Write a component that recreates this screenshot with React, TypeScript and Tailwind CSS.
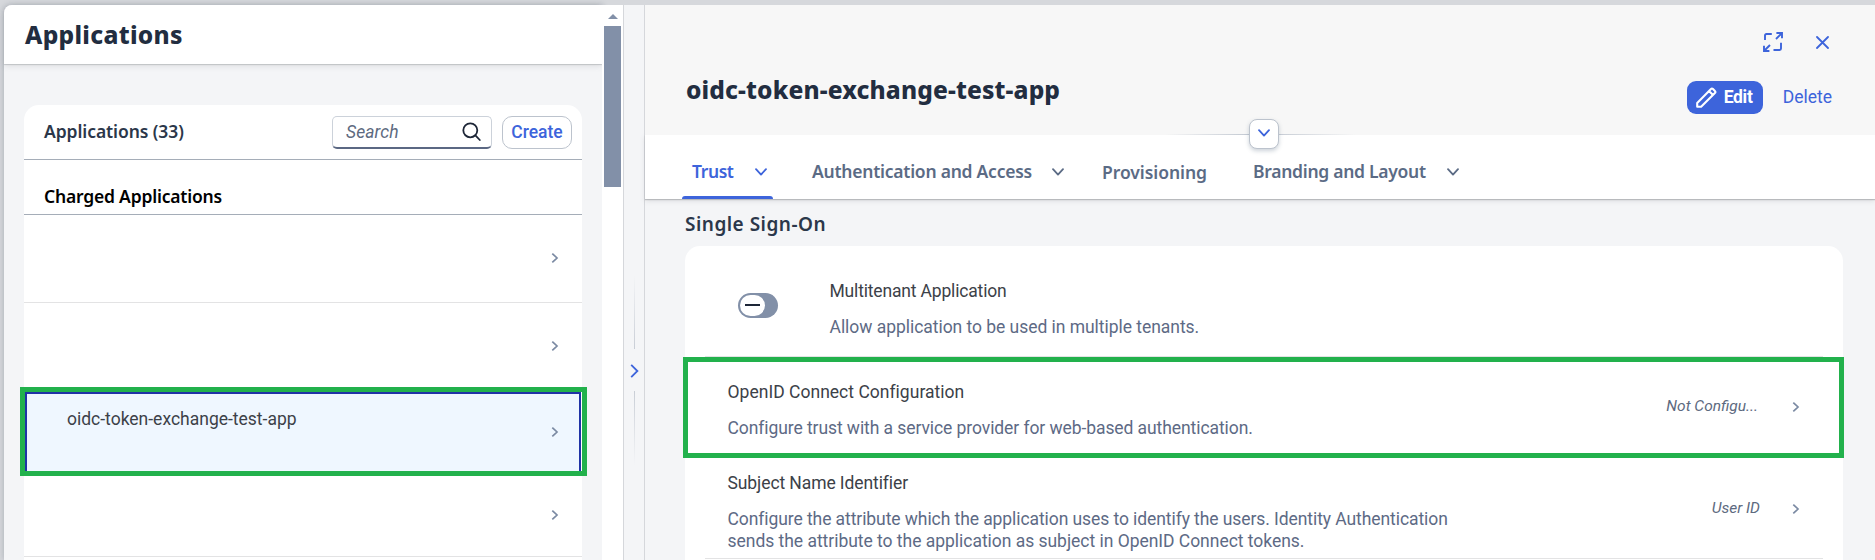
import type { ReactNode } from "react";

const MEDIUM = "font-['Noto_Sans',sans-serif] font-semibold text-[17.5px] whitespace-nowrap";

function ChevronRight({ className = "" }: { className?: string }) {
  return (
    <svg viewBox="0 0 8 10" className={`h-[10px] w-2 shrink-0 ${className}`} fill="none" stroke="currentColor" strokeWidth="1.7">
      <path d="M1.3 0.6 6 5 1.3 9.4" />
    </svg>
  );
}

function ChevronDown() {
  return (
    <svg viewBox="0 0 12 8" className="h-2 w-3 shrink-0" fill="none" stroke="currentColor" strokeWidth="1.8" strokeLinecap="round" strokeLinejoin="round">
      <path d="M1 1.2 6 6.6 11 1.2" />
    </svg>
  );
}

function AppRow({ className }: { className: string }) {
  return (
    <div className={`flex items-center justify-end border-b border-[#e3e3e4] pr-[23px] pb-0.5 text-[#7b8aa3] ${className}`}>
      <ChevronRight />
    </div>
  );
}

function ApplicationsPanel() {
  return (
    <section className="relative z-10 flex w-[598px] shrink-0 flex-col rounded-tl-lg bg-[#f4f5f7] shadow-[0_0_6px_rgba(34,53,72,0.25)]">
      <header className="z-10 flex h-[59px] shrink-0 items-center rounded-tl-lg bg-white pl-[21px] shadow-[0_1px_1px_rgba(85,90,95,0.25),0_2px_6px_rgba(85,90,95,0.15)]">
        <h1 className="font-['Noto_Sans',sans-serif] text-[24.5px] font-extrabold leading-8 tracking-[0.3px] text-[#222d40]">Applications</h1>
      </header>
      <div className="mx-5 mt-[41px] flex h-[455px] flex-col rounded-t-[15px] bg-white">
        <div className="flex h-[55px] shrink-0 items-center border-b border-[#a5adb8] pr-[10px] pl-5">
          <h2 className={`${MEDIUM} pb-0.5 tracking-[-0.08px] text-[#2b374a]`}>Applications (33)</h2>
          <div className="ml-auto flex h-[33px] w-[160px] items-center justify-between rounded-[5px] border border-b-2 border-[#ccd2da] border-b-[#5b6883] pr-[10px] pl-[13px]">
            <span className="pt-0.5 text-[17.5px] italic tracking-[0.1px] text-[#5d6a80]">Search</span>
            <svg viewBox="0 0 19 19" className="size-[19px]" fill="none" stroke="#1d2637" strokeWidth="1.8" strokeLinecap="round">
              <circle cx="8.3" cy="8.3" r="7" />
              <path d="m13.4 13.4 4.4 4.6" />
            </svg>
          </div>
          <button className="ml-[10px] h-[33px] w-[70px] rounded-[10px] border border-[#bcc3cd] text-[17.5px] font-medium text-[#3d64db]">Create</button>
        </div>
        <div className="flex h-[55px] shrink-0 items-end border-b border-[#a5adb8] pb-[5px] pl-5">
          <h3 className={`${MEDIUM} tracking-[-0.2px] text-black`}>Charged Applications</h3>
        </div>
        <AppRow className="h-[88px]" />
        <div className="flex h-[84px] shrink-0 items-center justify-end pr-[23px] text-[#7b8aa3]">
          <ChevronRight className="mt-px" />
        </div>
        <div className="-mr-[5px] -ml-1 h-[89px] shrink-0 border-[5px] border-[#22b14c] bg-white">
          <div className="mr-px flex h-full items-center justify-between border-2 border-b-0 border-[#2033a6] bg-[#eff7ff] pr-5">
            <span className="mb-[26px] pl-[40px] text-[17.5px] text-[#3c4148]">oidc-token-exchange-test-app</span>
            <ChevronRight className="mb-[2px] text-[#7b8aa3]" />
          </div>
        </div>
        <AppRow className="h-[81px]" />
      </div>
    </section>
  );
}

function Scrollbar() {
  return (
    <div className="z-10 flex w-[22px] shrink-0 flex-col items-center border-r border-[#d5d7db] bg-white pt-[9px]">
      <svg viewBox="0 0 10 5" className="h-[5px] w-[10px] shrink-0" fill="#8290a8">
        <path d="M5 0 10 5H0z" />
      </svg>
      <div className="mt-[7px] h-[161px] w-[17px] shrink-0 bg-[#8290a8]" />
    </div>
  );
}

function Splitter() {
  return (
    <div className="flex w-[21px] shrink-0 flex-col items-center border-r border-[#d5d7db] bg-[#f4f5f7] pt-[270px]">
      <div className="h-[74px] w-px bg-linear-to-b from-transparent to-[#c9ced6]" />
      <svg viewBox="0 0 9 14" className="mt-[15px] mb-[13px] h-[14px] w-[9px] shrink-0" fill="none" stroke="#3d64db" strokeWidth="1.8">
        <path d="M1.2 0.8 7.4 7 1.2 13.2" />
      </svg>
      <div className="h-[74px] w-px bg-linear-to-b from-[#c9ced6] to-transparent" />
    </div>
  );
}

function DetailHeader() {
  return (
    <header className="relative flex h-[130px] shrink-0 flex-col bg-[#f7f7f7] pl-10">
      <div className="flex h-[51px] items-center justify-end pt-[23px] pr-[46px] text-[#3d64db]">
        <svg viewBox="0 0 20 20" className="size-5" fill="none" stroke="currentColor" strokeWidth="1.9">
          <path d="M2 8V3.4A1.4 1.4 0 0 1 3.4 2H8.8M18 10.8V16.6A1.4 1.4 0 0 1 16.6 18H10.5M13 7 18.5 1.5M7 13 1.5 18.5" />
          <path d="M13.4 1H19V6.3M1 13.7V19H6.4" />
        </svg>
        <svg viewBox="0 0 13 13" className="ml-[33px] size-[13px]" fill="none" stroke="currentColor" strokeWidth="1.8" strokeLinecap="round">
          <path d="m1 1 11 11M12 1 1 12" />
        </svg>
      </div>
      <div className="flex h-[79px] justify-between pr-[43px]">
        <h1 className="pt-[18px] pl-px font-['Noto_Sans',sans-serif] text-[24.5px] font-extrabold leading-8 tracking-[0.13px] text-[#222d40]">oidc-token-exchange-test-app</h1>
        <div className="flex pt-[25px]">
          <button className="flex h-[33px] w-[76px] items-center rounded-[9px] bg-[#3d64db] pl-[9px] text-[17.5px] font-bold tracking-[-0.3px] text-white">
            <svg viewBox="0 0 21 21" className="mr-[7px] size-[21px]" fill="none" stroke="currentColor" strokeWidth="2.1" strokeLinejoin="round">
              <path d="M1.2 19.8V15.9L15 2.1Q15.9 1 17 2.1L18.9 4Q20 5.1 18.9 6L5.1 19.8ZM13.2 4.2 16.8 7.8" />
            </svg>
            Edit
          </button>
          <button className="ml-5 h-[33px] text-[17.5px] text-[#3d64db]">Delete</button>
        </div>
      </div>
      <div className="absolute bottom-0 left-1/2 h-px w-[190px] -translate-x-1/2 bg-linear-to-r from-transparent via-[#bcc3cd] to-transparent" />
      <button className="absolute top-[114px] left-[604px] flex h-[30px] w-[30px] items-center justify-center rounded-lg border border-[#bcc3cd] bg-white pb-[3px] text-[#3d64db] shadow-[0_2px_4px_rgba(85,107,130,0.3)]">
        <ChevronDown />
      </button>
    </header>
  );
}

function Tabs() {
  return (
    <nav className="flex h-[64px] shrink-0 items-start bg-white pl-[37px] text-[#5b6b85] shadow-[0_1px_1px_rgba(85,90,95,0.3),0_2px_5px_rgba(85,90,95,0.15)]">
      <div className="flex h-[64px] w-[91px] flex-col text-[#3d64db]">
        <div className="flex h-[61px] items-center justify-between pt-[12px] pr-[6px] pl-[10px]">
          <span className={`${MEDIUM} tracking-[-0.4px]`}>Trust</span>
          <ChevronDown />
        </div>
        <div className="h-[3px] rounded-t-sm bg-[#3d64db]" />
      </div>
      <div className="ml-[39px] flex h-[61px] items-center gap-[20px] pt-[12px]">
        <span className={`${MEDIUM} w-[220px] tracking-[-0.24px]`}>Authentication and Access</span>
        <ChevronDown />
      </div>
      <div className="ml-[38px] flex h-[61px] w-[151px] items-center pt-[14px]">
        <span className={`${MEDIUM} tracking-[-0.05px]`}>Provisioning</span>
      </div>
      <div className="flex h-[61px] items-center gap-[20px] pt-[12px]">
        <span className={`${MEDIUM} w-[174px] tracking-[-0.28px]`}>Branding and Layout</span>
        <ChevronDown />
      </div>
    </nav>
  );
}

function Setting({ title, value, className, titleClass = "", children }: { title: string; value: string; className: string; titleClass?: string; children: ReactNode }) {
  return (
    <div className={`flex ${className}`}>
      <div className="w-[760px] leading-[21.3px]">
        <div className={`mb-[15px] text-[#3c4148] ${titleClass}`}>{title}</div>
        <div className="tracking-[-0.08px] text-[#5d6a85]">{children}</div>
      </div>
      <div className="ml-auto flex h-[49px] items-center text-[15.5px] italic text-[#5d6a80]">
        <span>{value}</span>
        <span className={`flex justify-end text-[#7b8aa3] ${value === "User ID" ? "w-[40px]" : "w-[42px]"}`}>
          <ChevronRight />
        </span>
      </div>
    </div>
  );
}

function SingleSignOn() {
  return (
    <div className="flex flex-1 flex-col pr-[32px] pl-[40px]">
      <h2 className="h-[47px] pt-[12px] font-['Noto_Sans',sans-serif] text-[19px] font-semibold leading-[26px] tracking-[0.48px] text-[#2b374a]">Single Sign-On</h2>
      <div className="flex flex-1 flex-col rounded-t-[15px] bg-white text-[17.5px]">
        <div className="mx-5 flex h-[111px] shrink-0 border-b border-[#e3e3e4]">
          <div className="mt-[47px] ml-[33px] flex h-[25px] w-10 items-center rounded-full bg-[#8290a8] pl-0.5">
            <div className="flex h-[21px] w-[25px] items-center justify-center rounded-full bg-white">
              <div className="mb-px h-0.5 w-[15px] bg-[#1d2637]" />
            </div>
          </div>
          <div className="ml-[51.5px] pt-[35px] leading-[21px]">
            <div className="mb-[15px] tracking-[-0.17px] text-[#3c4148]">Multitenant Application</div>
            <div className="tracking-[-0.04px] text-[#5d6a85]">Allow application to be used in multiple tenants.</div>
          </div>
        </div>
        <div className="-mr-px -ml-[2px] h-[101px] shrink-0 border-[5px] border-[#22b14c]">
          <Setting title="OpenID Connect Configuration" titleClass="tracking-[0.02px]" value="Not Configu..." className="pt-[20px] pr-[39px] pl-[39.5px]">
            Configure trust with a service provider for web-based authentication.
          </Setting>
        </div>
        <div className="mx-5 h-[101px] shrink-0 border-b border-[#e3e3e4]">
          <Setting title="Subject Name Identifier" titleClass="tracking-[-0.09px]" value="User ID" className="pt-[15px] pr-[23px] pl-[22.5px] [&>div:last-child]:mt-[11px]">
            Configure the attribute which the application uses to identify the users. Identity Authentication
            <br />
            <span className="tracking-[-0.03px]">sends the attribute to the application as subject in OpenID Connect tokens.</span>
          </Setting>
        </div>
      </div>
    </div>
  );
}

export default function App() {
  return (
    <div className="flex h-[560px] w-[1875px] overflow-hidden bg-[#d6d8dc] pt-[5px] pl-1 font-[Roboto,sans-serif]">
      <ApplicationsPanel />
      <Scrollbar />
      <Splitter />
      <main className="flex min-w-0 flex-1 flex-col bg-[#f4f5f7]">
        <DetailHeader />
        <Tabs />
        <SingleSignOn />
      </main>
    </div>
  );
}
